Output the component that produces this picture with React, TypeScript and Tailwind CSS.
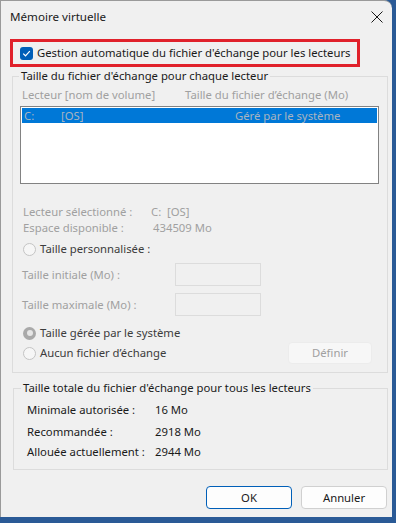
import React from "react";

const font = { fontFamily: '"Noto Sans", "Segoe UI", sans-serif' };

function Radio({ checked = false }: { checked?: boolean }) {
  return checked ? (
    <span className="flex h-[13px] w-[13px] shrink-0 items-center justify-center rounded-full bg-[#a9a9a9]">
      <span className="h-[6px] w-[6px] rounded-full bg-[#e6e6e6]" />
    </span>
  ) : (
    <span className="h-[13px] w-[13px] shrink-0 rounded-full border border-[#c4c4c4] bg-[#f6f6f6]" />
  );
}

export default function App() {
  return (
    <div className="h-[523px] w-[396px] overflow-hidden bg-[#2a5a96]" style={font}>
      <div className="flex h-[517px] w-[392px] flex-col rounded-tr-[8px] border-l border-t border-[#9a9a9a] bg-[#f0f0f0] text-[11.3px] leading-[16px] text-[#1a1a1a]">
        {/* title bar */}
        <div className="flex h-[31px] items-center justify-between pl-[9px] pr-[9px]">
          <span className="text-[11.6px]">Mémoire virtuelle</span>
          <svg width="12" height="12" viewBox="0 0 12 12" className="mt-[1px]">
            <path d="M0.5 0.5 L11.5 11.5 M11.5 0.5 L0.5 11.5" stroke="#1a1a1a" strokeWidth="1" />
          </svg>
        </div>

        {/* red highlight with checkbox */}
        <div className="ml-[9px] mt-[7px] flex h-[28px] w-[350px] items-center gap-[4px] whitespace-nowrap border-[3px] border-[#e0212b] pl-[7px]">
          <span className="flex h-[13px] w-[13px] shrink-0 items-center justify-center rounded-[3px] bg-[#005fb8]">
            <svg width="9" height="9" viewBox="0 0 9 9">
              <path d="M1.2 4.6 L3.5 6.8 L7.8 2.2" fill="none" stroke="#ffffff" strokeWidth="1.2" />
            </svg>
          </span>
          <span>Gestion automatique du fichier d'échange pour les lecteurs</span>
        </div>

        {/* group 1 */}
        <fieldset className="ml-[11px] mt-[1px] h-[305px] w-[376px] border border-[#dcdcdc] px-0">
          <legend className="ml-[6px] px-[2px] leading-[16px]">Taille du fichier d'échange pour chaque lecteur</legend>
          <div className="flex flex-col whitespace-nowrap text-[#a0a0a0]">
            <div className="mt-[3px] flex h-[16px] pl-[9px]">
              <span className="w-[163px]">Lecteur [nom de volume]</span>
              <span>Taille du fichier d’échange (Mo)</span>
            </div>
            <div className="ml-[7px] mt-[3px] h-[78px] w-[359px] border border-[#828282] bg-white p-[1px]">
              <div className="flex h-[15px] items-center bg-[#0078d7] text-[#a8b4c0]">
                <span className="w-[39px] pl-[2px]">C:</span>
                <span className="w-[174px]">[OS]</span>
                <span>Géré par le système</span>
              </div>
            </div>
            <div className="mt-[20px] flex h-[16px] pl-[10px]">
              <span className="w-[128px]">Lecteur sélectionné :</span>
              <span>C:&nbsp;&nbsp;[OS]</span>
            </div>
            <div className="flex h-[16px] pl-[10px]">
              <span className="w-[130px]">Espace disponible :</span>
              <span>434509 Mo</span>
            </div>
            <div className="mt-[5px] flex h-[16px] items-center gap-[4px] pl-[10px] text-[#3c3c3c]">
              <Radio />
              <span>Taille personnalisée :</span>
            </div>
            <div className="mt-[6px] flex h-[23px] items-center pl-[9px]">
              <span className="w-[153px]">Taille initiale (Mo) :</span>
              <span className="h-[23px] w-[86px] border border-[#dcdcdc] bg-[#f0f0f0]" />
            </div>
            <div className="mt-[7px] flex h-[23px] items-center pl-[9px]">
              <span className="w-[153px]">Taille maximale (Mo) :</span>
              <span className="h-[23px] w-[86px] border border-[#dcdcdc] bg-[#f0f0f0]" />
            </div>
            <div className="mt-[9px] flex h-[16px] items-center gap-[4px] pl-[10px] text-[#3c3c3c]">
              <Radio checked />
              <span>Taille gérée par le système</span>
            </div>
            <div className="mt-[1px] flex items-center justify-between pl-[10px] pr-[15px] text-[#3c3c3c]">
              <div className="flex items-center gap-[4px]">
                <Radio />
                <span>Aucun fichier d’échange</span>
              </div>
              <button className="flex h-[22px] w-[84px] items-center justify-center rounded-[4px] border border-[#ececec] bg-[#f7f7f7] text-[#a0a0a0]">
                Définir
              </button>
            </div>
          </div>
        </fieldset>

        {/* group 2 */}
        <fieldset className="ml-[12px] mt-[7px] h-[90px] w-[375px] border border-[#dcdcdc] px-0">
          <legend className="ml-[7px] px-[2px] leading-[16px]">Taille totale du fichier d'échange pour tous les lecteurs</legend>
          <div className="flex flex-col whitespace-nowrap pl-[13px]">
            <div className="mt-[6px] flex h-[16px]">
              <span className="w-[128px]">Minimale autorisée :</span>
              <span>16 Mo</span>
            </div>
            <div className="mt-[6px] flex h-[16px]">
              <span className="w-[128px]">Recommandée :</span>
              <span>2918 Mo</span>
            </div>
            <div className="mt-[4px] flex h-[16px]">
              <span className="w-[128px]">Allouée actuellement :</span>
              <span>2944 Mo</span>
            </div>
          </div>
        </fieldset>

        {/* buttons */}
        <div className="mt-[16px] flex justify-end gap-[9px] pr-[5px]">
          <button className="h-[23px] w-[86px] rounded-[4px] border border-[#005fb8] bg-[#fdfdfd] text-[#1a1a1a]">OK</button>
          <button className="h-[23px] w-[86px] rounded-[4px] border border-[#d0d0d0] bg-[#fdfdfd] text-[#1a1a1a]">Annuler</button>
        </div>
      </div>
    </div>
  );
}
